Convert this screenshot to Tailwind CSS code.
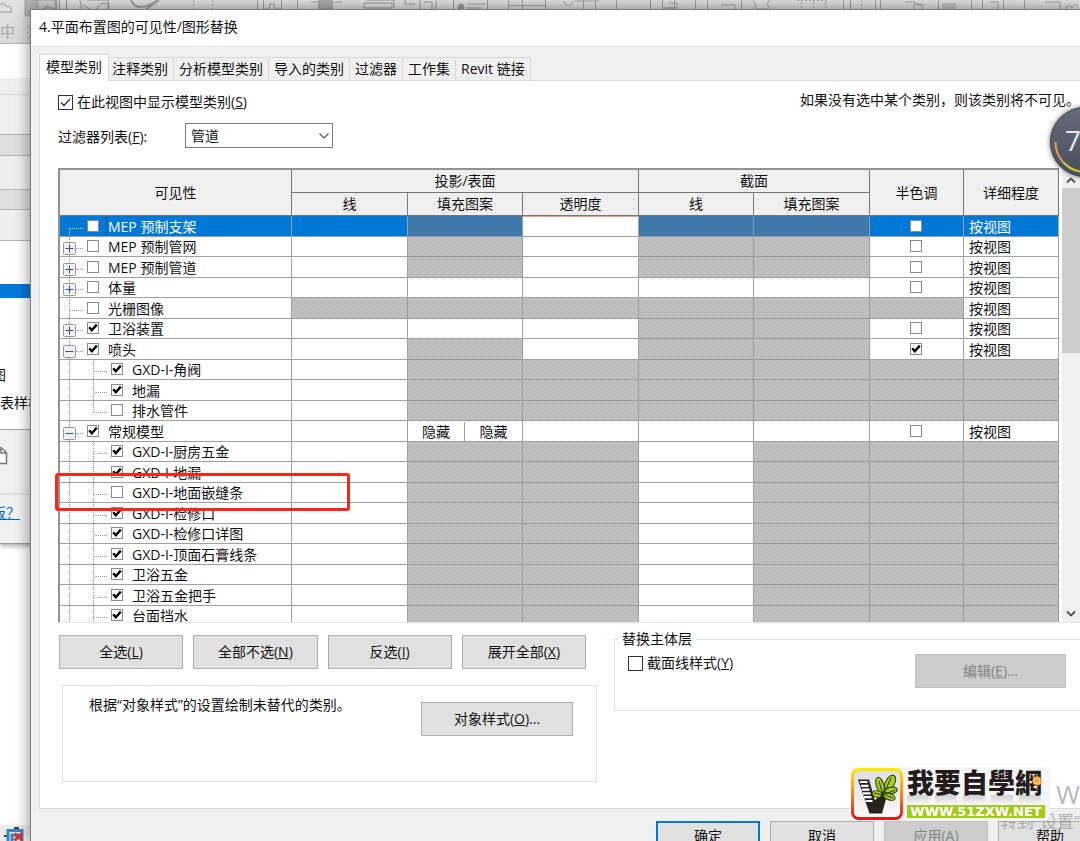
<!DOCTYPE html>
<html lang="zh-CN">
<head>
<meta charset="utf-8">
<meta name="viewport" content="width=device-width, initial-scale=1">
<title>可见性/图形替换</title>
<script src="https://cdn.jsdelivr.net/npm/@tailwindcss/browser@4"></script>
</head>
<body class="font-['Open_Sans','Noto_Sans_CJK_SC',sans-serif] text-sm text-[#111]">
<div class="relative h-screen overflow-hidden bg-white">

  <!-- application window behind the dialog -->
  <div class="flex h-full flex-col">
    <header class="h-[44px] shrink-0 border-b border-[#b4b4b4] bg-linear-to-b from-[#e2e2e2] to-[#dadada]">
      <svg class="block h-[43px] w-[1080px]" viewBox="0 0 1080 43" fill="none" stroke="#a2a2a2" stroke-width="1" aria-hidden="true">
        <path d="M0 5q4-4 6 1q6 0 5 6H0" stroke="#b0b0b0" stroke-width="1.500"/>
        <path d="M25 0h32v16H25z" fill="#b5b5b5" stroke="#a2a2a2"/><path d="M38 0h17v9l-8-3l-6 4h-3z" fill="#d2d2d2"/>
        <path d="M59.500 0v10M66.500 0v10M80 0l2 10M87 0h21v10M95 10l7-7l7 1v6M83 5l8 5" stroke="#999"/>
        <path d="M131 0q6 14 27 0M145 10l14-10" stroke-width="2"/>
        <path d="M193.500 0v10M212.500 0v10" stroke-dasharray="2 2"/>
        <path d="M257.500 0v10M263.500 0v9h6v-5h5v5h7V0M297.500 0v10M311 2h8v8M324 0v10M332 10V2h10"/>
        <path d="M319 0h13v9h-13z" fill="#b0b0b0"/>
        <path d="M364 3h28v5h-28zM366 0h28v8M405 0v4h10M420 0v10M424 2h8v8M436 0v10" stroke="#999"/>
        <path d="M453.500 0v10M487.500 0v10M508.500 0v10M545.500 0v10M508 5.500h37M522.500 0v10M467 4h18M467 8h14"/>
        <circle cx="461" cy="7" r="3" fill="#a0a0a0"/>
        <path d="M564 1a4 4 0 0 0 9 0M575 1h24M583.500 0v10M595.500 0v10M616.500 0v10M650.500 0v10M662.500 0v8h12V0M669 3h8v5h-8M695.500 0v10M707.500 0v10"/>
        <path d="M721 5h14v4M741.500 0v10M753 9l3-4l-3-5M770 9l-3-5l3-4M756 9h12M843.500 0v10M850.500 0v10M875.500 0v10M880.500 0v10"/>
        <path d="M797 .5h32M801.500 2v8M813.500 2v8M825.500 2v8M861.500 0v10" stroke-dasharray="2 2"/>
        <path d="M905 2h10l2 3h8M914 9V4h7l2 5M938.500 0v10M971.500 0v10M982.500 0v10M990 2h8v8M1003.500 0v10M1024.500 0v10"/>
        <path d="M942 3h14v7h-14z" fill="#c2c2c2" stroke="none"/><path d="M1045 2h15v8M1066 10a3 3 0 1 1 6-2a3 3 0 1 1 5 2"/>
        <path d="M27 26l3 3M26 34l2-2M28 39l2-4" stroke="#b0b0b0"/>
        <text x="0" y="37" font-size="15" fill="#a8a8a8" stroke="none">中</text>
      </svg>
    </header>
    <aside class="flex w-[200px] flex-1 flex-col" aria-label="属性">
      <div class="h-[34px]"></div>
      <div class="h-[17px] border-b border-[#d6d6d6] bg-[#efefef]"></div>
      <div class="h-[39px] bg-[#efefef]"></div>
      <div class="h-[22px] border-y border-[#b5b5b5] bg-[#dedede]"></div>
      <div class="h-[33px] bg-[#eeeeee]"></div>
      <div class="h-[21px] border-y border-[#b5b5b5] bg-[#dedede]"></div>
      <div class="h-[31px] border-b border-[#b0b4bb] bg-[#eeeeee]"></div>
      <div class="h-[43px]"></div>
      <div class="h-[14px] bg-[#0078d7]"></div>
      <div class="h-[131px] pt-[66px] leading-[22px]">
        <p class="-ml-2">图</p>
        <p class="pt-[6px]">表样板</p>
      </div>
      <div class="h-[65px] border-t border-[#a5a5ad] bg-[#f0f0f0] pt-[17px]">
        <svg class="block h-[18px] w-[9px]" viewBox="0 0 9 18" fill="#fff" stroke="#777" stroke-width="1.500" aria-hidden="true"><path d="M0 16.500h6.500V5.500L1 .8H0M1 1v5h5.500"/></svg>
      </div>
      <div class="h-[50px] border-y border-t-[#dcdcdc] border-b-[#9a9a9a] bg-[#f0f0f0] pt-[8px] shadow-[0_2px_5px_#aaa]">
        <a href="#" class="-ml-2 text-[#0066cc] underline">板？</a>
      </div>
      <div class="flex-1"></div>
      <div class="h-[16px] bg-[#ebebeb]">
        <svg class="block h-4 w-8" viewBox="0 0 32 16" aria-hidden="true"><path d="M4 11h3M14 3h5" stroke="#444" stroke-width="2"/><path d="M8 16V5.500h14V16M12 16v-6h8" fill="none" stroke="#3586c8" stroke-width="3"/><path d="M14.500 8.500l8 7M22.500 8.500l-8 7" stroke="#d43636" stroke-width="3"/></svg>
      </div>
    </aside>
  </div>

  <!-- dialog window -->
  <section role="dialog" aria-labelledby="dlg-title" class="absolute top-[9px] right-0 bottom-0 left-[30px] flex flex-col overflow-hidden border-t border-l border-[#7d7d7d] bg-[#f0f0f0] shadow-[0_0_14px_#0007]">
    <h1 id="dlg-title" class="h-[35px] shrink-0 bg-white px-2 leading-[34px]">4.平面布置图的可见性/图形替换</h1>

    <div role="tablist" class="z-10 -mb-px ml-2 flex shrink-0 items-end pt-[9px] leading-[22px]">
      <button role="tab" aria-selected="true" class="z-10 -mr-[2px] h-[27px] border border-b-0 border-[#d9d9d9] bg-white px-[6px] pb-[3px]">模型类别</button>
      <button role="tab" class="h-[24px] border-y border-r border-[#d9d9d9] px-[5px]">注释类别</button>
      <button role="tab" class="h-[24px] border-y border-r border-[#d9d9d9] px-[5px]">分析模型类别</button>
      <button role="tab" class="h-[24px] border-y border-r border-[#d9d9d9] px-[5px]">导入的类别</button>
      <button role="tab" class="h-[24px] border-y border-r border-[#d9d9d9] px-[5px]">过滤器</button>
      <button role="tab" class="h-[24px] border-y border-r border-[#d9d9d9] px-[5px]">工作集</button>
      <button role="tab" class="h-[24px] border-y border-r border-[#d9d9d9] px-[5px]">Revit 链接</button>
    </div>

    <div role="tabpanel" class="ml-2 h-[729px] shrink-0 border-y border-l border-[#dcdcdc] bg-white pt-[8px] pl-[18px]">
      <div class="flex h-[26px] justify-between">
        <label class="flex items-center gap-[4px]">
          <span class="grid size-[15px]">
            <input type="checkbox" checked class="col-start-1 row-start-1 size-[15px] appearance-none border border-[#333] bg-white">
            <svg class="pointer-events-none col-start-1 row-start-1 size-[15px]" viewBox="0 0 15 15" fill="none" stroke="#333" stroke-width="1.300"><path d="M3 7.500l3 3l6-6.500"/></svg>
          </span>
          <span>在此视图中显示模型类别(<u>S</u>)</span>
        </label>
        <p class="leading-[22px] whitespace-nowrap">如果没有选中某个类别，则该类别将不可见。</p>
      </div>
      <div class="flex h-[53px] items-start pt-[8px]">
        <label for="filter" class="w-[127px] pt-[3px] leading-[22px]">过滤器列表(<u>F</u>):</label>
        <span class="grid items-center">
          <select id="filter" class="col-start-1 row-start-1 h-[25px] w-[148px] appearance-none border border-[#7a7a7a] bg-white pl-[5px] leading-[22px]"><option>管道</option></select>
          <svg class="pointer-events-none col-start-1 row-start-1 mr-[4px] h-[6px] w-[10px] justify-self-end" viewBox="0 0 10 6" fill="none" stroke="#555" stroke-width="1.200"><path d="M.5 .5l4.500 4.500l4.500-4.500"/></svg>
        </span>
      </div>

      <div class="flex h-[455px] border-b border-[#e6e6e6]">
        <div class="min-w-0 flex-1 overflow-hidden border-t-2 border-l-2 border-[#929292]">
          <table class="w-full table-fixed border-separate border-spacing-0">
            <colgroup><col><col class="w-[116px]"><col class="w-[115px]"><col class="w-[116px]"><col class="w-[115px]"><col class="w-[116px]"><col class="w-[94px]"><col class="w-[95px]"></colgroup>
            <thead class="bg-[#f0f0f0] leading-[20px]">
              <tr class="h-[23px]">
                <th rowspan="2" class="border-r border-b border-[#777] p-0 font-normal">可见性</th>
                <th colspan="3" class="border-r border-b border-[#777] p-0 font-normal">投影/表面</th>
                <th colspan="2" class="border-r border-b border-[#777] p-0 font-normal">截面</th>
                <th rowspan="2" class="border-r border-b border-[#777] p-0 font-normal">半色调</th>
                <th rowspan="2" class="border-r border-b border-[#777] p-0 font-normal">详细程度</th>
              </tr>
              <tr class="h-[23px]">
                <th class="border-r border-b border-[#777] p-0 font-normal">线</th>
                <th class="border-r border-b border-[#777] p-0 font-normal">填充图案</th>
                <th class="border-r border-b border-[#777] p-0 font-normal">透明度</th>
                <th class="border-r border-b border-[#777] p-0 font-normal">线</th>
                <th class="border-r border-b border-[#777] p-0 font-normal">填充图案</th>
              </tr>
            </thead>
            <tbody id="rows"></tbody>
          </table>
        </div>
        <div class="ml-[3px] flex w-[18px] flex-col bg-[#f0f0f0]">
          <button aria-label="向上滚动" class="flex h-[20px] items-center justify-center pt-1"><svg class="h-[7px] w-[10px]" viewBox="0 0 10 7" fill="none" stroke="#505050" stroke-width="1.800"><path d="M1 5.500l4-4l4 4"/></svg></button>
          <div class="h-[165px] bg-[#cdcdcd]"></div>
          <button aria-label="向下滚动" class="mt-auto flex h-[18px] items-center justify-center"><svg class="h-[7px] w-[10px]" viewBox="0 0 10 7" fill="none" stroke="#505050" stroke-width="1.800"><path d="M1 1.500l4 4l4-4"/></svg></button>
        </div>
      </div>

      <div class="flex items-start gap-[17px] pt-[12px] pl-px">
        <div class="w-[538px] shrink-0">
          <div class="grid grid-cols-4 gap-[10px] pr-[11px]">
            <button class="h-[34px] border border-[#adadad] bg-[#e1e1e1]">全选(<u>L</u>)</button>
            <button class="h-[34px] border border-[#adadad] bg-[#e1e1e1]">全部不选(<u>N</u>)</button>
            <button class="h-[34px] border border-[#adadad] bg-[#e1e1e1]">反选(<u>I</u>)</button>
            <button class="h-[34px] border border-[#adadad] bg-[#e1e1e1]">展开全部(<u>X</u>)</button>
          </div>
          <div class="mt-[16px] ml-[3px] flex h-[97px] items-start justify-between border border-[#e0e0e0] pt-[16px] pr-[23px] pl-[26px]">
            <p class="-mt-[8px] leading-[22px]">根据“对象样式”的设置绘制未替代的类别。</p>
            <button class="h-[34px] w-[152px] border border-[#adadad] bg-[#e1e1e1]">对象样式(<u>O</u>)...</button>
          </div>
        </div>
        <fieldset class="-mt-[6px] h-[82px] min-w-0 flex-1 border border-r-0 border-[#e0e0e0] pl-[3px]">
          <legend class="px-[4px] leading-[20px]">替换主体层</legend>
          <div class="flex items-start justify-between pr-[14px] pl-[10px]">
            <label class="flex items-center gap-[4px] pt-[3px] leading-[22px]"><input type="checkbox" class="size-[15px] appearance-none border border-[#333] bg-white"><span>截面线样式(<u>Y</u>)</span></label>
            <button disabled class="mt-[5px] h-[34px] w-[151px] border border-[#bfbfbf] bg-[#cccccc] text-[#838383]">编辑(<u>E</u>)...</button>
          </div>
        </fieldset>
      </div>
    </div>

    <footer class="-mr-[22px] flex shrink-0 justify-end gap-[10px] pt-[12px]">
      <button class="h-[34px] w-[104px] border-2 border-[#0078d7] bg-[#e1e1e1] pb-[5px]">确定</button>
      <button class="h-[34px] w-[104px] border border-[#adadad] bg-[#e1e1e1] pb-[5px]">取消</button>
      <button disabled class="h-[34px] w-[104px] border border-[#c4c4c4] bg-[#cccccc] pb-[5px] text-[#838383]">应用(A)</button>
      <button class="h-[34px] w-[104px] border border-[#adadad] bg-[#e1e1e1] pb-[5px]">帮助</button>
    </footer>
  </section>

  <!-- highlight over the table row -->
  <div class="pointer-events-none absolute top-[473px] left-[55px] h-[38px] w-[295px] rounded-[3px] border-3 border-[#fb2416]"></div>

  <!-- floating meter -->
  <div class="absolute top-[107px] -right-[40px] size-[70px] rounded-full bg-linear-to-b from-[#666c7a] to-[#484d5a] shadow-[0_0_5px_#0009]">
    <svg class="absolute inset-0" viewBox="0 0 70 70" fill="none" aria-hidden="true"><circle cx="35" cy="35" r="34.500" stroke="#454a56"/><path d="M5.500 35A30 30 0 0 0 13 55" stroke="#e89a4a" stroke-width="2"/><path d="M13 55A30 30 0 0 0 35 65" stroke="#dcc93a" stroke-width="2"/></svg>
    <span class="absolute top-[15px] left-[15px] text-[28px] leading-[36px] text-[#e8e8ec]">7</span>
  </div>

  <!-- system activation notice -->
  <div class="pointer-events-none absolute top-[778px] left-[1000px] w-[80px] overflow-hidden whitespace-nowrap text-[#888]/60">
    <p class="pl-[56px] text-[26px] leading-[32px]">Windows</p>
    <p class="text-[17px] leading-[24px]">转到“设置”以激活</p>
  </div>

  <!-- site logo -->
  <div class="absolute top-[767px] left-[850px] flex h-[54px] w-[200px] gap-[4px] rounded-md bg-[#f6f6f6] p-px">
    <svg class="size-[52px] shrink-0" viewBox="0 0 52 52" role="img" aria-label="51zxw">
      <defs>
        <linearGradient id="rim" x2="0" y2="1"><stop offset="0" stop-color="#ffe800"/><stop offset=".5" stop-color="#f58a1c"/><stop offset="1" stop-color="#e2141c"/></linearGradient>
        <linearGradient id="face" x2="0" y2="1"><stop offset="0" stop-color="#dedede"/><stop offset="1" stop-color="#fbfbfb"/></linearGradient>
      </defs>
      <rect x="1.500" y="1.500" width="49" height="49" rx="6" fill="url(#face)" stroke="url(#rim)" stroke-width="3"/>
      <path d="M7 11.500h11l6 21l4-5h8l-5 18H18.500z" fill="#2a211f"/>
      <path d="M9 14h7.500M10 17.800h7.500M11 21.600h7.500M12 25.400h7.500M13 29.200h7.500M14.500 33h7" stroke="#fff" stroke-width="2.200"/>
      <path d="M29 34q1-5 4-9" fill="none" stroke="#2a211f" stroke-width="4"/>
      <g fill="#a3cf1b" stroke="#24300c" stroke-width="1">
        <ellipse cx="29" cy="17" rx="3.800" ry="8" transform="rotate(-18 29 17)"/>
        <ellipse cx="39" cy="15" rx="4.500" ry="8.500" transform="rotate(28 39 15)"/>
        <ellipse cx="26" cy="26" rx="5" ry="3.200" transform="rotate(12 26 26)"/>
        <ellipse cx="40" cy="22.500" rx="6.500" ry="3.400" transform="rotate(-12 40 22.500)"/>
        <ellipse cx="38" cy="28.500" rx="6.500" ry="3.200" transform="rotate(22 38 28.500)"/>
        <path d="M32 27L28 13M32 27l8-17M32 27l-9-2M32 27l12-5M32 26l10 4" fill="none"/>
      </g>
    </svg>
    <div class="flex flex-col">
      <div class="relative h-[37px] w-[138px]">
        <p class="font-['Noto_Sans_CJK_TC',sans-serif] text-[27px] leading-[27px] font-black whitespace-nowrap text-[#231c1a]">我要自學網</p>
        <p aria-hidden="true" class="absolute top-[27px] left-0 h-[9px] w-full bg-linear-to-b from-[#999]/40 to-transparent [mask-image:repeating-linear-gradient(90deg,#000_0_22px,transparent_22px_28px)]"></p>
        <svg class="absolute top-[8px] right-[3px] size-[10px]" viewBox="0 0 10 10" fill="#ffd9a0" stroke="#f7941d" stroke-width="1.500" aria-hidden="true"><circle cx="5" cy="5" r="4"/><circle cx="5" cy="5" r="1.500"/></svg>
      </div>
      <p class="h-[13px] w-[138px] bg-[#a3cb1c] text-center font-['DejaVu_Sans',sans-serif] text-[13px] leading-[13px] font-bold text-white">WWW.51ZXW.NET</p>
    </div>
  </div>
</div>

<script>
// kind: e = collapsed, o = expanded, n = no children, c = child, l = last child
// cells: w = editable, d = unavailable, h = split "hidden"; order follows the five middle columns
const data = [
  ["n", 0, "MEP 预制支架", "wdwdd", "0"],
  ["e", 0, "MEP 预制管网", "wdwdd", "0"],
  ["e", 0, "MEP 预制管道", "wdwdd", "0"],
  ["e", 0, "体量", "wwwww", "0"],
  ["n", 0, "光栅图像", "ddddd", "x"],
  ["e", 1, "卫浴装置", "wwwdd", "0"],
  ["o", 1, "喷头", "wdwdd", "1"],
  ["c", 1, "GXD-I-角阀", "wdddd", "-"],
  ["c", 1, "地漏", "wdddd", "-"],
  ["l", 0, "排水管件", "wdddd", "-"],
  ["o", 1, "常规模型", "whwww", "0"],
  ["c", 1, "GXD-I-厨房五金", "wddwd", "-"],
  ["c", 1, "GXD-I-地漏", "wddwd", "-"],
  ["c", 0, "GXD-I-地面嵌缝条", "wddwd", "-"],
  ["c", 1, "GXD-I-检修口", "wddwd", "-"],
  ["c", 1, "GXD-I-检修口详图", "wddwd", "-"],
  ["c", 1, "GXD-I-顶面石膏线条", "wddwd", "-"],
  ["c", 1, "卫浴五金", "wddwd", "-"],
  ["c", 1, "卫浴五金把手", "wddwd", "-"],
  ["c", 1, "台面挡水", "wddwd", "-"]
];
const box = (on, label) => `<span class="mt-[3px] grid size-[12px] shrink-0"><input type="checkbox" aria-label="${label}" ${on ? "checked" : ""} class="col-start-1 row-start-1 size-[12px] appearance-none border border-[#8a8a8a] bg-white">${on ? '<svg class="pointer-events-none col-start-1 row-start-1 size-[12px]" viewBox="0 0 12 12" fill="none" stroke="#000" stroke-width="2.4"><path d="M2.200 5.200l2.600 3l5-5.600"/></svg>' : ""}</span>`;
const tree = (kind, first) => {
  const child = kind === "c" || kind === "l";
  const ink = first ? "#cfe6fa" : "#999";
  let s = `<svg class="${child ? "h-[21px] w-[51px] shrink-0" : "h-[21px] w-[27px] shrink-0"}" viewBox="0 0 ${child ? 51 : 27} 21" fill="none" stroke="${ink}" aria-hidden="true"><g stroke-dasharray="1 1"><path d="M9.500 ${first ? 11 : 0}V21"/>`;
  s += child ? `<path d="M33.500 0V${kind === "l" ? 11 : 21}M34 11.500H47"/>` : `<path d="M10 11.500H23"/>`;
  s += "</g>";
  if (kind === "e" || kind === "o") {
    s += `<rect x="3.500" y="5.500" width="12" height="12" rx="1" fill="#f1f1f1" stroke="#999"/><path d="M5.500 11.500h8${kind === "e" ? "M9.500 7.500v8" : ""}" stroke="#3b4f9c"/>`;
  }
  return s + "</svg>";
};
const dither = "border-r border-b border-[#9b9b9b] bg-[repeating-conic-gradient(#b1b1b1_0_25%,#cacaca_0_50%)] bg-[length:2px_2px] p-0";
const ditherBlue = "border-r border-b border-[#8c9cab] bg-[repeating-conic-gradient(#3979b2_0_25%,#4679a6_0_50%)] bg-[length:2px_2px] p-0";
const plain = "border-r border-b border-[#a0a0a0] p-0";
document.getElementById("rows").innerHTML = data.map(([kind, on, name, cells, tone], i) => {
  const first = i === 0;
  const fill = first ? ditherBlue : dither;
  let h = `<tr class="${i % 2 ? "h-[20px]" : "h-[21px]"} ${first ? "bg-[#0078d7] text-white" : "bg-white"}">`;
  h += `<td class="${plain}"><div class="flex h-[19px] items-start overflow-hidden leading-[20px] whitespace-nowrap">${tree(kind, first)}${box(on, name)}<span class="${first ? "ml-[7px] border-l border-dotted border-[#003a70] pl-px" : "ml-[9px]"}">${name}</span></div></td>`;
  for (let j = 0; j < 5; j++) {
    if (cells[j] === "d") h += `<td class="${fill}"></td>`;
    else if (cells[j] === "h") h += `<td class="${plain}"><div class="grid h-[19px] grid-cols-2 text-center leading-[20px]"><span class="border-r border-[#a0a0a0]">隐藏</span><span>隐藏</span></div></td>`;
    else h += `<td class="${first && j === 2 ? "border-t border-r border-b border-[#a0a0a0] border-t-[#e0a080] bg-white p-0" : plain}"></td>`;
  }
  h += tone === "0" || tone === "1" ? `<td class="${plain}"><div class="flex h-[19px] justify-center pr-[2px]">${box(tone === "1", name + " 半色调")}</div></td>` : `<td class="${dither}"></td>`;
  h += tone === "-" ? `<td class="${dither}"></td>` : `<td class="${plain}"><div class="h-[19px] overflow-hidden pl-[5px] leading-[20px]">按视图</div></td>`;
  return h + "</tr>";
}).join("");
</script>
</body>
</html>
